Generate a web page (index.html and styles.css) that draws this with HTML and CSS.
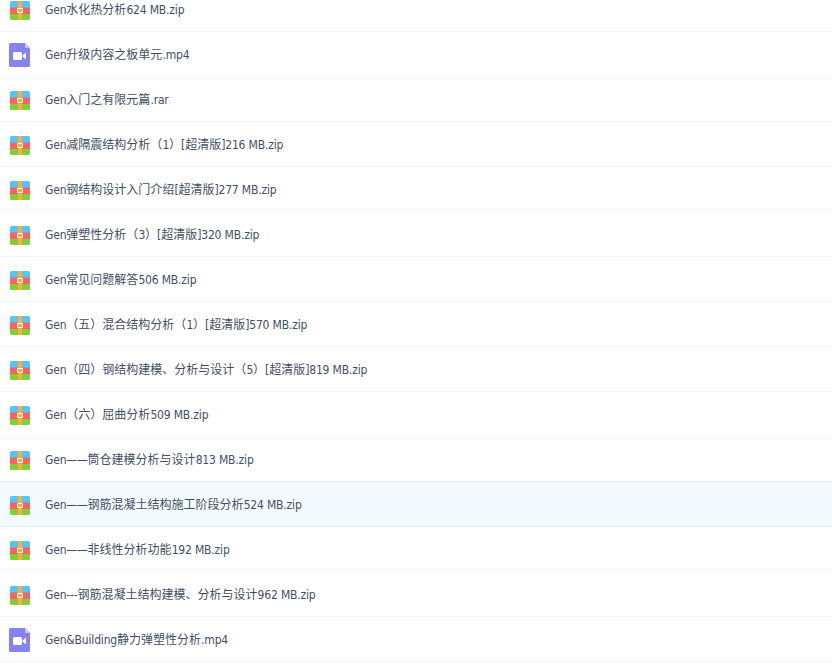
FILE: index.html
```html
<!DOCTYPE html>
<html lang="zh-CN">
<head>
  <meta charset="UTF-8">
  <meta name="viewport" content="width=device-width, initial-scale=1.0">
  <title>文件列表</title>
  <link rel="stylesheet" href="styles.css">
</head>
<body>

  <!-- Shared file type icons -->
  <svg class="icon-defs" width="0" height="0">
    <symbol id="icon-zip" viewBox="0 0 24 24">
      <path fill="#55c5f7" d="M2 10V4.500A1.500 1.500 0 0 1 3.500 3h17A1.500 1.500 0 0 1 22 4.500V10z"/>
      <path fill="#fb6260" d="M2 9.500h20V16H2z"/>
      <path fill="#80cf38" d="M2 16h20v4.500a1.500 1.500 0 0 1-1.500 1.500h-17A1.500 1.500 0 0 1 2 20.500z"/>
      <path fill="#ffae3b" d="M10 3h4v19h-4z"/>
      <path fill="#ffae3b" stroke="#fff" d="M9.500 10.500h5v4h-5z"/>
    </symbol>
    <symbol id="icon-video" viewBox="0 0 24 24">
      <path fill="#8583f1" d="M2.500 0H17l5 5v17.500a1.500 1.500 0 0 1-1.500 1.500h-18A1.500 1.500 0 0 1 1 22.500v-21A1.500 1.500 0 0 1 2.500 0z"/>
      <path fill="#c5c4fa" d="M17 0l5 5h-4a1 1 0 0 1-1-1z"/>
      <rect fill="#fff" x="5" y="9" width="9" height="8" rx="1.500"/>
      <path fill="#fff" d="M14.500 12.500L18 9.500v7l-3.500-3z"/>
    </symbol>
  </svg>

  <ul class="file-list">
    <li class="file-row">
      <svg class="file-icon"><use href="#icon-zip"/></svg>
      <span class="file-name"><span class="en">Gen</span>水化热分析<span class="en">624 MB.zip</span></span>
    </li>
    <li class="file-row">
      <svg class="file-icon"><use href="#icon-video"/></svg>
      <span class="file-name"><span class="en">Gen</span>升级内容之板单元<span class="en">.mp4</span></span>
    </li>
    <li class="file-row">
      <svg class="file-icon"><use href="#icon-zip"/></svg>
      <span class="file-name"><span class="en">Gen</span>入门之有限元篇<span class="en">.rar</span></span>
    </li>
    <li class="file-row">
      <svg class="file-icon"><use href="#icon-zip"/></svg>
      <span class="file-name"><span class="en">Gen</span>减隔震结构分析（<span class="en">1</span>）<span class="en">[</span>超清版<span class="en">]216 MB.zip</span></span>
    </li>
    <li class="file-row">
      <svg class="file-icon"><use href="#icon-zip"/></svg>
      <span class="file-name"><span class="en">Gen</span>钢结构设计入门介绍<span class="en">[</span>超清版<span class="en">]277 MB.zip</span></span>
    </li>
    <li class="file-row">
      <svg class="file-icon"><use href="#icon-zip"/></svg>
      <span class="file-name"><span class="en">Gen</span>弹塑性分析（<span class="en">3</span>）<span class="en">[</span>超清版<span class="en">]320 MB.zip</span></span>
    </li>
    <li class="file-row">
      <svg class="file-icon"><use href="#icon-zip"/></svg>
      <span class="file-name"><span class="en">Gen</span>常见问题解答<span class="en">506 MB.zip</span></span>
    </li>
    <li class="file-row">
      <svg class="file-icon"><use href="#icon-zip"/></svg>
      <span class="file-name"><span class="en">Gen</span>（五）混合结构分析（<span class="en">1</span>）<span class="en">[</span>超清版<span class="en">]570 MB.zip</span></span>
    </li>
    <li class="file-row">
      <svg class="file-icon"><use href="#icon-zip"/></svg>
      <span class="file-name"><span class="en">Gen</span>（四）钢结构建模、分析与设计（<span class="en">5</span>）<span class="en">[</span>超清版<span class="en">]819 MB.zip</span></span>
    </li>
    <li class="file-row">
      <svg class="file-icon"><use href="#icon-zip"/></svg>
      <span class="file-name"><span class="en">Gen</span>（六）屈曲分析<span class="en">509 MB.zip</span></span>
    </li>
    <li class="file-row">
      <svg class="file-icon"><use href="#icon-zip"/></svg>
      <span class="file-name"><span class="en">Gen——</span>筒仓建模分析与设计<span class="en">813 MB.zip</span></span>
    </li>
    <li class="file-row active">
      <svg class="file-icon"><use href="#icon-zip"/></svg>
      <span class="file-name"><span class="en">Gen——</span>钢筋混凝土结构施工阶段分析<span class="en">524 MB.zip</span></span>
    </li>
    <li class="file-row">
      <svg class="file-icon"><use href="#icon-zip"/></svg>
      <span class="file-name"><span class="en">Gen——</span>非线性分析功能<span class="en">192 MB.zip</span></span>
    </li>
    <li class="file-row">
      <svg class="file-icon"><use href="#icon-zip"/></svg>
      <span class="file-name"><span class="en">Gen---</span>钢筋混凝土结构建模、分析与设计<span class="en">962 MB.zip</span></span>
    </li>
    <li class="file-row">
      <svg class="file-icon"><use href="#icon-video"/></svg>
      <span class="file-name"><span class="en">Gen&amp;Building</span>静力弹塑性分析<span class="en">.mp4</span></span>
    </li>
  </ul>

</body>
</html>
```
FILE: styles.css
```css
* {
  box-sizing: border-box;
  margin: 0;
  padding: 0;
}

body {
  font-family: "Noto Sans CJK SC", sans-serif;
  font-size: 12px;
  color: #424e67;
  background: #fff;
  overflow: hidden;
}

.icon-defs {
  display: block;
}

/* The list is scrolled a little, the first row is cut off */
.file-list {
  list-style: none;
  margin-top: -13px;
}

.file-row {
  display: flex;
  align-items: center;
  gap: 13px;
  height: 45px;
  padding-left: 8px;
  border-bottom: 1px solid #f2f6fd;
}

.file-row.active {
  height: 46px;
  margin-top: -1px;
  background: #f4fbff;
  border-top: 1px solid #d9eaf8;
  border-bottom-color: #d9eaf8;
}

.file-icon {
  flex: none;
  width: 24px;
  height: 24px;
  margin-top: 2px;
}

.file-name {
  line-height: 18px;
  white-space: nowrap;
}

/* Latin letters and digits */
.en {
  font-family: "DejaVu Sans Condensed", "DejaVu Sans", sans-serif;
  font-stretch: condensed;
  letter-spacing: -0.17px;
}
```
